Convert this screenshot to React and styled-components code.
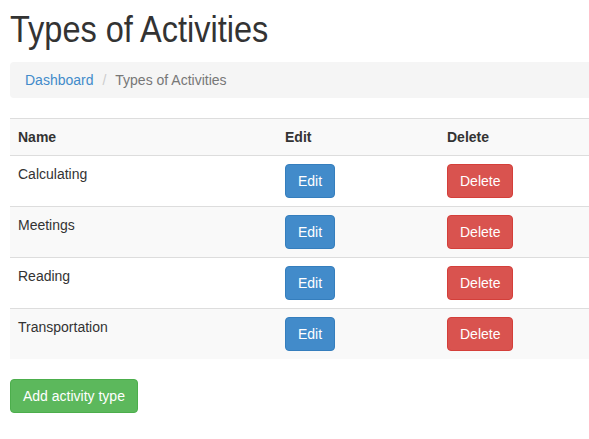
import React from "react";
import styled, { createGlobalStyle } from "styled-components";

const GlobalStyle = createGlobalStyle`
  html, body { margin: 0; padding: 0; background: #fff; }
  body {
    font-family: "Liberation Sans", Arial, Helvetica, sans-serif;
    font-size: 14px;
    line-height: 1.428571429;
    color: #333;
    overflow: hidden;
  }
  * { box-sizing: border-box; }
`;

const Page = styled.div`
  padding: 10px 0 0 10px;
`;

const Title = styled.h1`
  margin: 0 0 12px;
  font-family: "Liberation Sans", Arial, sans-serif;
  font-size: 36px;
  font-weight: 400;
  line-height: 40px;
  color: #333;
  transform: scaleX(0.903);
  transform-origin: left center;
  white-space: nowrap;
`;

const Breadcrumb = styled.ol`
  display: flex;
  gap: 4px;
  list-style: none;
  margin: 0 0 20px;
  padding: 8px 15px;
  background: #f5f5f5;
  border-radius: 4px 0 0 4px;
`;

const Crumb = styled.li`
  color: ${(p) => (p.$active ? "#777" : "#428bca")};
  &:not(:first-child)::before {
    content: "/\\00a0";
    padding: 0 5px;
    color: #ccc;
  }
`;

const CrumbLink = styled.a`
  color: #428bca;
  text-decoration: none;
`;

const Table = styled.table`
  width: 100%;
  border-collapse: collapse;
  border-spacing: 0;
  table-layout: fixed;
  margin-bottom: 20px;
`;

const Row = styled.tr`
  &:nth-child(odd) { background: #f9f9f9; }
`;

const HeadCell = styled.th`
  text-align: left;
  font-weight: bold;
  padding: 8px;
  line-height: 20px;
  vertical-align: top;
  border-top: 1px solid #ddd;
  border-bottom: 1px solid #ddd;
`;

const Cell = styled.td`
  padding: 8px;
  line-height: 20px;
  vertical-align: top;
  border-top: 1px solid #ddd;
`;

const Button = styled.button`
  display: inline-block;
  font-family: inherit;
  font-size: 14px;
  line-height: 20px;
  padding: 6px 12px;
  border-radius: 4px;
  border: 1px solid ${(p) => p.$border};
  background: ${(p) => p.$bg};
  color: #fff;
  cursor: pointer;
  white-space: nowrap;
  vertical-align: middle;
`;

const variants = {
  primary: { bg: "#428bca", border: "#357ebd" },
  danger: { bg: "#d9534f", border: "#d43f3a" },
  success: { bg: "#5cb85c", border: "#4cae4c" },
};

const Btn = ({ kind, children }) => (
  <Button $bg={variants[kind].bg} $border={variants[kind].border}>
    {children}
  </Button>
);

const items = ["Calculating", "Meetings", "Reading", "Transportation"];

export default function App() {
  return (
    <>
      <GlobalStyle />
      <Page>
        <Title>Types of Activities</Title>
        <Breadcrumb>
          <Crumb>
            <CrumbLink href="#">Dashboard</CrumbLink>
          </Crumb>
          <Crumb $active>Types of Activities</Crumb>
        </Breadcrumb>
        <Table>
          <colgroup>
            <col style={{ width: 267 }} />
            <col style={{ width: 162 }} />
            <col />
          </colgroup>
          <tbody>
            <Row>
              <HeadCell>Name</HeadCell>
              <HeadCell>Edit</HeadCell>
              <HeadCell>Delete</HeadCell>
            </Row>
            {items.map((name) => (
              <Row key={name}>
                <Cell>{name}</Cell>
                <Cell>
                  <Btn kind="primary">Edit</Btn>
                </Cell>
                <Cell>
                  <Btn kind="danger">Delete</Btn>
                </Cell>
              </Row>
            ))}
          </tbody>
        </Table>
        <Btn kind="success">Add activity type</Btn>
      </Page>
    </>
  );
}
